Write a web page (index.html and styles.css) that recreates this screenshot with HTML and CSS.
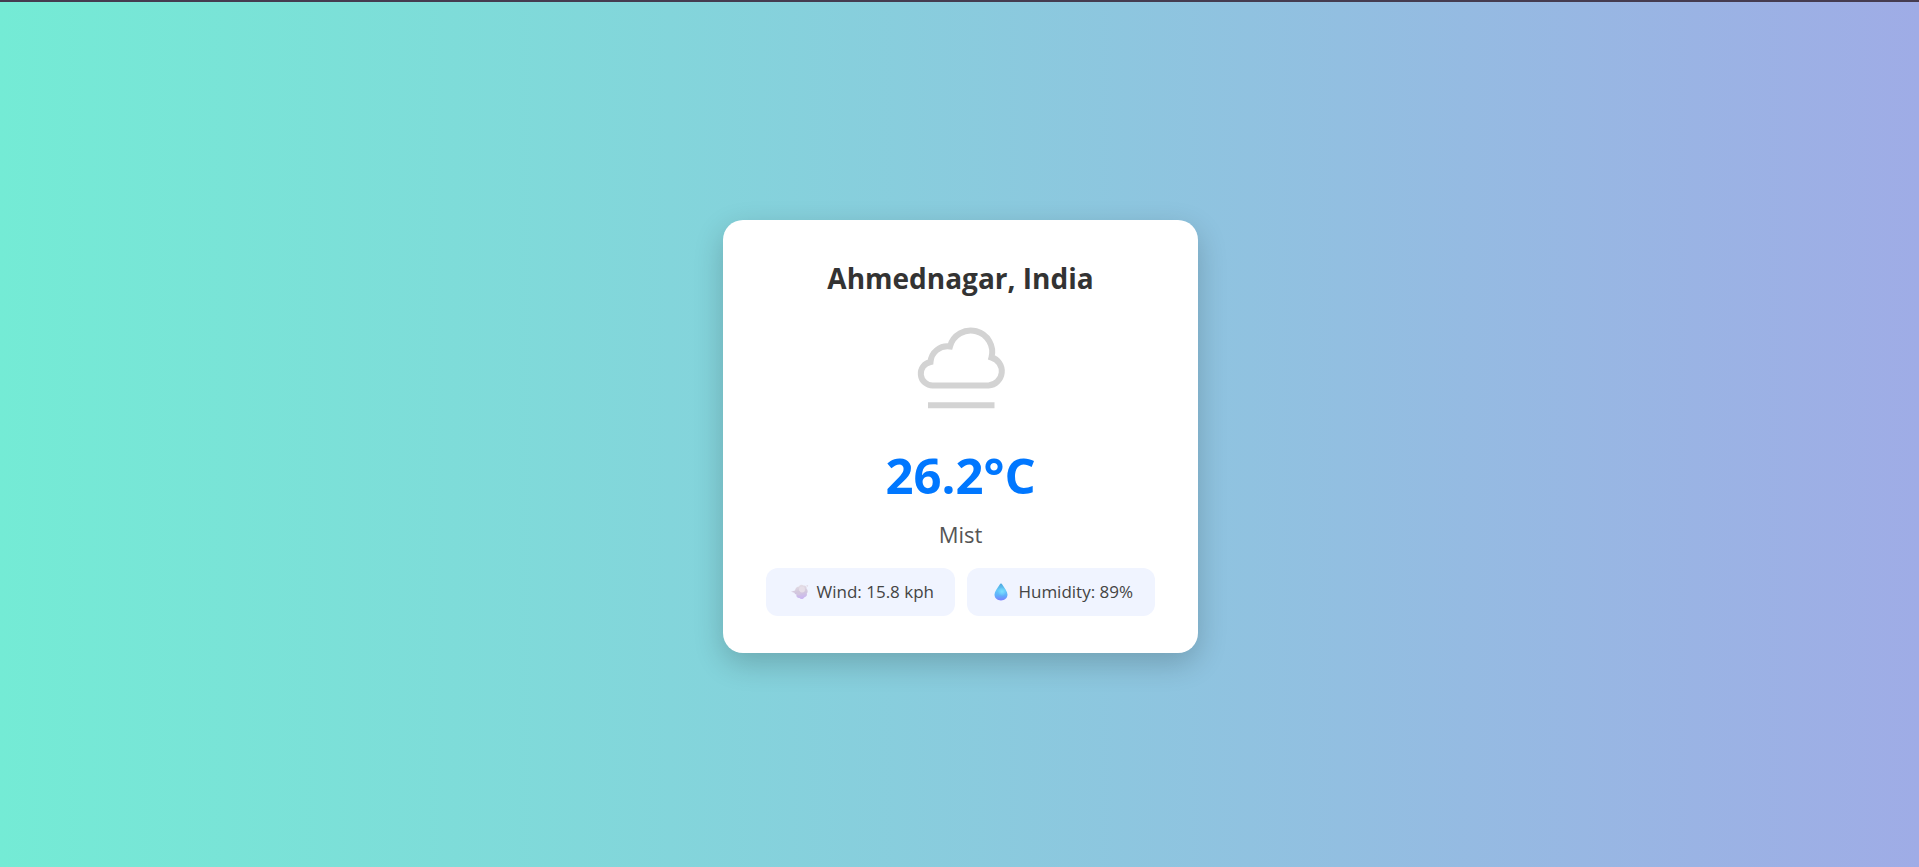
FILE: index.html
```html
<!DOCTYPE html>
<html lang="en">
<head>
  <meta charset="utf-8">
  <meta name="viewport" content="width=device-width, initial-scale=1">
  <title>Weather</title>
  <link rel="stylesheet" href="styles.css">
</head>
<body>
  <main class="page">
    <article class="card">
      <h1 class="city">Ahmednagar, India</h1>
      <svg class="condition-icon" viewBox="0 0 100 100" role="img" aria-label="Mist">
        <path d="M22 66.500 H77.500 A14.300 14.300 0 0 0 80.500 38.500 A21.450 21.450 0 0 0 39 27.500 A17 17 0 0 0 19.500 43 A11.850 11.850 0 0 0 22 66.500 Z"/>
        <path d="M17 86.200 H83.500"/>
      </svg>
      <p class="temperature">26.2°C</p>
      <p class="condition">Mist</p>
      <ul class="details">
        <li class="detail">
          <svg class="detail-icon" viewBox="0 0 18 18" aria-hidden="true">
            <defs>
              <linearGradient id="puff" x1="0.400" y1="0" x2="0.500" y2="1">
                <stop offset="0" stop-color="#e6e0e6"/>
                <stop offset="0.500" stop-color="#d3c8dc"/>
                <stop offset="1" stop-color="#c9b4f2"/>
              </linearGradient>
            </defs>
            <path fill="url(#puff)" d="M0 8.800 L4 7.500 C4.500 5 6 3.500 8 3.500 C8.500 1.500 11.500 1 12.500 2.500 C14.500 2 16 3.500 15.500 5.500 C17 7 17 9.500 15.800 10.500 C16.500 12.500 15 14 13.500 14.200 C12 16.500 9.500 16.500 8.500 15 C6.500 15 4.800 13.500 5.500 11.500 C4 11.500 3.500 10.500 3.500 9.800 Z"/>
            <circle cx="11" cy="6.500" r="3" fill="#e6dee8"/>
            <circle cx="7.500" cy="10" r="2" fill="#d3c7de"/>
            <circle cx="16.300" cy="2.800" r="0.900" fill="#e3dce8"/>
          </svg>
          <span>Wind: 15.8 kph</span>
        </li>
        <li class="detail">
          <svg class="detail-icon" viewBox="0 0 18 18" aria-hidden="true">
            <defs>
              <linearGradient id="drop" x1="0.500" y1="0" x2="0.500" y2="1">
                <stop offset="0" stop-color="#4fa9df"/>
                <stop offset="0.400" stop-color="#64c8f8"/>
                <stop offset="0.700" stop-color="#60b0fb"/>
                <stop offset="1" stop-color="#7b80ff"/>
              </linearGradient>
              <radialGradient id="shine">
                <stop offset="0" stop-color="#7be0ff"/>
                <stop offset="1" stop-color="#7be0ff" stop-opacity="0"/>
              </radialGradient>
            </defs>
            <path fill="url(#drop)" d="M9 0.500 C9.600 0.500 10 1 10.400 1.700 C12.500 5 15.500 8.500 15.500 11.600 C15.500 15.200 12.700 17.500 9 17.500 C5.300 17.500 2.500 15.200 2.500 11.600 C2.500 8.500 5.500 5 7.600 1.700 C8 1 8.400 0.500 9 0.500 Z"/>
            <circle cx="10" cy="8.500" r="4.500" fill="url(#shine)"/>
          </svg>
          <span>Humidity: 89%</span>
        </li>
      </ul>
    </article>
  </main>
</body>
</html>
```
FILE: styles.css
```css
* {
  box-sizing: border-box;
}

body {
  margin: 0;
  font-family: "Segoe UI", "Open Sans", "Noto Sans", sans-serif;
}

.page {
  display: flex;
  align-items: center;
  justify-content: center;
  min-height: 100vh;
  padding: 4px 16px 0 18px;
  border-top: 2px solid #453c50;
  background: linear-gradient(to right, #74ebd5, #9face6);
}

.card {
  display: flex;
  flex-direction: column;
  align-items: center;
  width: 100%;
  max-width: 475px;
  padding: 38px 43px 37px;
  border-radius: 20px;
  background: #fff;
  box-shadow: 0 10px 30px rgba(0, 0, 0, 0.2);
  text-align: center;
}

.city {
  margin: 0 0 21px;
  color: #333;
  font-size: 28px;
  line-height: 40px;
}

.condition-icon {
  width: 100px;
  height: 100px;
  fill: none;
  stroke: #d3d3d3;
  stroke-width: 6;
}

.temperature {
  margin: 22px 0 10px;
  color: #0077ff;
  font-size: 49px;
  font-weight: 700;
  line-height: 68px;
}

.condition {
  margin: 0 0 19px;
  color: #555;
  font-size: 22px;
  line-height: 30px;
}

.details {
  display: flex;
  gap: 12px;
  width: 100%;
  margin: 0;
  padding: 0;
  list-style: none;
}

.detail {
  display: flex;
  flex: 1;
  align-items: center;
  justify-content: center;
  gap: 8px;
  padding: 12px 0 12px 4px;
  border-radius: 12px;
  background: #f0f4ff;
  color: #444;
  font-size: 17px;
  line-height: 24px;
  white-space: nowrap;
}

.detail-icon {
  width: 18px;
  height: 18px;
}
```
